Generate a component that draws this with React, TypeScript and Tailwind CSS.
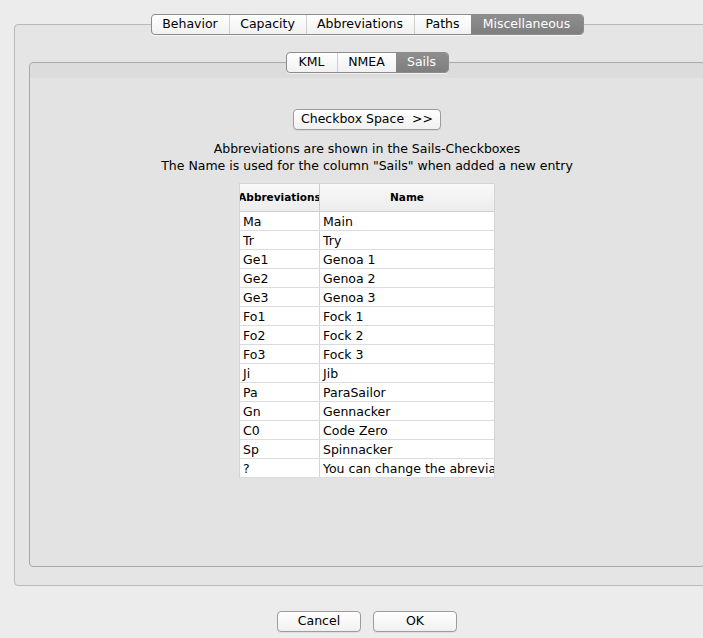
import React from 'react';

const mainTabs = ['Behavior', 'Capacity', 'Abbreviations', 'Paths', 'Miscellaneous'];
const subTabs = ['KML', 'NMEA', 'Sails'];

const sails: [string, string][] = [
  ['Ma', 'Main'],
  ['Tr', 'Try'],
  ['Ge1', 'Genoa 1'],
  ['Ge2', 'Genoa 2'],
  ['Ge3', 'Genoa 3'],
  ['Fo1', 'Fock 1'],
  ['Fo2', 'Fock 2'],
  ['Fo3', 'Fock 3'],
  ['Ji', 'Jib'],
  ['Pa', 'ParaSailor'],
  ['Gn', 'Gennacker'],
  ['C0', 'Code Zero'],
  ['Sp', 'Spinnacker'],
  ['?', 'You can change the abreviations and names here'],
];

const Segmented: React.FC<{ items: string[]; selected: string; widths: number[] }> = ({ items, selected, widths }) => (
  <div className="flex h-[21px] rounded-[4px] border border-[#8c8c8c] bg-[linear-gradient(#ffffff,#f1f1f1)] overflow-hidden shadow-[0_1px_0_rgba(255,255,255,0.6)]">
    {items.map((item, i) => {
      const active = item === selected;
      return (
        <div
          key={item}
          style={{ width: widths[i] }}
          className={`flex items-center justify-center text-[12.5px] leading-none ${
            active
              ? 'bg-[linear-gradient(#8e8e8e,#7e7e7e)] text-white'
              : 'text-black'
          } ${i > 0 && !active ? 'border-l border-[#cfcfcf]' : ''}`}
        >
          {item}
        </div>
      );
    })}
  </div>
);

const MacButton: React.FC<{ label: string; className?: string }> = ({ label, className }) => (
  <button
    className={`h-[21px] rounded-[4px] border border-[#9c9c9c] bg-[linear-gradient(#ffffff,#f0f0f0)] text-[12.5px] text-black leading-none shadow-[0_1px_0_rgba(0,0,0,0.06)] ${className || ''}`}
  >
    {label}
  </button>
);

export default function App() {
  return (
    <div
      className="w-[703px] h-[638px] overflow-hidden bg-[#ececec] text-black"
      style={{ fontFamily: '"DejaVu Sans", "Liberation Sans", sans-serif' }}
    >
      <div className="w-[734px] flex flex-col items-center pt-[24px]">
        {/* Outer tab panel */}
        <div className="self-start ml-[14px] w-[706px] h-[562px] rounded-[4px] border border-[#b9b9b9] bg-[#e5e5e5] flex flex-col items-center">
          <div className="-mt-[11px]">
            <Segmented items={mainTabs} selected="Miscellaneous" widths={[77, 77, 108, 57, 112]} />
          </div>

          {/* Inner tab panel */}
          <div className="mt-[27px] w-[676px] h-[505px] rounded-[4px] border border-[#a9a9a9] bg-[linear-gradient(#dcdcdc_0,#dcdcdc_15px,#e3e3e3_15px)] flex flex-col items-center">
            <div className="-mt-[11px]">
              <Segmented items={subTabs} selected="Sails" widths={[50, 59, 52]} />
            </div>

            <MacButton label="Checkbox Space  >>" className="mt-[36px] w-[148px] whitespace-pre" />

            <div className="mt-[10px] text-[12.5px] leading-[17px] text-center">
              <div>Abbreviations are shown in the Sails-Checkboxes</div>
              <div>The Name is used for the column "Sails" when added a new entry</div>
            </div>

            {/* Table */}
            <div className="mt-[9px] w-[256px] bg-white border-t border-l border-r border-[#d4d4d4]">
              <div className="flex h-[28px] border-b border-[#cfcfcf] bg-[linear-gradient(#f9f9f9,#ececec)] text-[10.5px] font-bold">
                <div className="w-[80px] shrink-0 flex items-center justify-center overflow-hidden border-r border-[#cdcdcd]">
                  <span className="shrink-0 whitespace-nowrap">Abbreviations</span>
                </div>
                <div className="flex-1 flex items-center justify-center">Name</div>
              </div>
              {sails.map(([abbr, name]) => (
                <div key={abbr} className="flex h-[19px] border-b border-[#dcdcdc] text-[12.5px] leading-[19px]">
                  <div className="w-[80px] shrink-0 pl-[3px] border-r border-[#d4d4d4] whitespace-nowrap overflow-hidden">{abbr}</div>
                  <div className="flex-1 pl-[3px] whitespace-nowrap overflow-hidden">{name}</div>
                </div>
              ))}
            </div>
          </div>
        </div>

        {/* Dialog buttons */}
        <div className="mt-[25px] flex gap-[12px]">
          <MacButton label="Cancel" className="w-[84px]" />
          <MacButton label="OK" className="w-[84px]" />
        </div>
      </div>
    </div>
  );
}
